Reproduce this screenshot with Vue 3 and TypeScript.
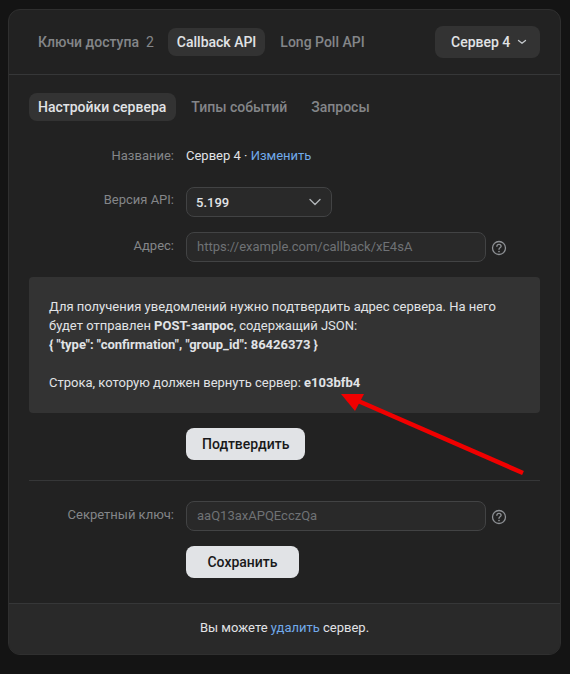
<script setup lang="ts">
const tabs = [
  { label: 'Ключи доступа', count: '2', active: false },
  { label: 'Callback API', count: '', active: true },
  { label: 'Long Poll API', count: '', active: false },
]
const subTabs = [
  { label: 'Настройки сервера', active: true },
  { label: 'Типы событий', active: false },
  { label: 'Запросы', active: false },
]
</script>

<template>
  <div class="page">
    <div class="card">
      <header class="head">
        <nav class="tabs">
          <span v-for="t in tabs" :key="t.label" class="tab" :class="{ on: t.active }">
            {{ t.label }}<span v-if="t.count" class="count">{{ t.count }}</span>
          </span>
        </nav>
        <button class="server">
          Сервер 4
          <svg width="10" height="6" viewBox="0 0 10 6" fill="none"><path d="M1.5 1.500 5 4.300l3.500-2.800" stroke="#c4c8cc" stroke-width="1.300" stroke-linecap="round" stroke-linejoin="round"/></svg>
        </button>
      </header>

      <section class="body">
        <nav class="subtabs">
          <span v-for="t in subTabs" :key="t.label" class="subtab" :class="{ on: t.active }">{{ t.label }}</span>
        </nav>

        <div class="row name-row">
          <label class="lbl">Название:</label>
          <span class="val">Сервер 4 · <a class="link">Изменить</a></span>
        </div>

        <div class="row api-row">
          <label class="lbl">Версия API:</label>
          <div class="select">
            <span>5.199</span>
            <svg width="12" height="8" viewBox="0 0 12 8" fill="none"><path d="M1 1.500 6 6.500l5-5" stroke="#aeb2b6" stroke-width="1.400" stroke-linecap="round" stroke-linejoin="round"/></svg>
          </div>
        </div>

        <div class="row addr-row">
          <label class="lbl">Адрес:</label>
          <div class="input">https://example.com/callback/xE4sA</div>
          <svg class="help" width="16" height="16" viewBox="0 0 16 16" fill="none">
            <circle cx="8" cy="8" r="6.500" stroke="#8e9195" stroke-width="1.300"/>
            <path d="M5.900 6.300c0-1.200.9-2 2.100-2s2.100.8 2.100 1.900c0 1.600-2.100 1.500-2.100 3.100" stroke="#8e9195" stroke-width="1.300" stroke-linecap="round"/>
            <circle cx="8" cy="11.500" r=".85" fill="#8e9195"/>
          </svg>
        </div>

        <div class="notice">
          Для получения уведомлений нужно подтвердить адрес сервера. На него<br>
          будет отправлен <b>POST-запрос</b>, содержащий JSON:<br>
          <b>{ "type": "confirmation", "group_id": 86426373 }</b><br><br>
          Строка, которую должен вернуть сервер: <b>e103bfb4</b>
        </div>

        <div class="action confirm"><button class="btn">Подтвердить</button></div>

        <div class="divider"></div>

        <div class="row secret-row">
          <label class="lbl">Секретный ключ:</label>
          <div class="input">aaQ13axAPQEcczQa</div>
          <svg class="help" width="16" height="16" viewBox="0 0 16 16" fill="none">
            <circle cx="8" cy="8" r="6.500" stroke="#8e9195" stroke-width="1.300"/>
            <path d="M5.900 6.300c0-1.200.9-2 2.100-2s2.100.8 2.100 1.900c0 1.600-2.100 1.500-2.100 3.100" stroke="#8e9195" stroke-width="1.300" stroke-linecap="round"/>
            <circle cx="8" cy="11.500" r=".85" fill="#8e9195"/>
          </svg>
        </div>

        <div class="action save"><button class="btn">Сохранить</button></div>
      </section>

      <footer class="foot">Вы можете <a class="link">удалить</a> сервер.</footer>
    </div>

    <svg class="arrow" width="570" height="674" viewBox="0 0 570 674" fill="none">
      <path d="M523 473 L356 400" stroke="#f00000" stroke-width="4.500"/>
      <path d="M341 394 L364 394 L355 411 Z" fill="#f00000"/>
    </svg>
  </div>
</template>

<style>
html, body { margin: 0; background: #141414; }
</style>

<style scoped>
.page {
  position: relative;
  width: 570px;
  height: 674px;
  padding: 9px 9px 0 8px;
  box-sizing: border-box;
  background: #141414;
  font-family: Roboto, "Noto Sans", sans-serif;
  font-size: 13px;
  color: #e1e3e6;
  overflow: hidden;
}
.card {
  height: 646px;
  box-sizing: border-box;
  border: 1px solid #2f2f2f;
  border-radius: 12px;
  background: #222222;
  display: flex;
  flex-direction: column;
  overflow: hidden;
}
.head {
  height: 65px;
  flex: none;
  box-sizing: border-box;
  border-bottom: 1px solid #363738;
  display: flex;
  align-items: center;
  justify-content: space-between;
  padding: 0 20px 1px 20px;
}
.tabs { display: flex; align-items: center; }
.tab {
  height: 28px;
  line-height: 28px;
  padding: 0 9px;
  margin-right: 6px;
  border-radius: 8px;
  color: #848689;
  font-size: 14px;
  font-weight: 500;
  white-space: nowrap;
}
.tab:first-child { margin-right: 5px; }
.tab.on { background: #333333; color: #e1e3e6; }
.count { margin-left: 7px; font-weight: 400; }
.server {
  height: 32px;
  width: 105px;
  border: 0;
  border-radius: 8px;
  background: #333333;
  color: #e1e3e6;
  font: 500 14px Roboto, sans-serif;
  display: flex;
  align-items: center;
  gap: 7px;
  padding: 0 0 0 16px;
}
.body { flex: 1; padding: 18px 20px 0; display: flex; flex-direction: column; }
.subtabs { display: flex; align-items: center; height: 28px; }
.subtab {
  height: 28px;
  line-height: 28px;
  padding: 0 9px;
  margin-right: 6px;
  border-radius: 8px;
  color: #848689;
  font-size: 14px;
  font-weight: 500;
  white-space: nowrap;
}
.subtab.on { background: #333333; color: #e1e3e6; padding-right: 10px; }
.row { display: flex; align-items: flex-start; }
.lbl {
  width: 145px;
  flex: none;
  text-align: right;
  color: #848689;
  margin-right: 12px;
  line-height: 18px;
}
.name-row { margin-top: 26px; height: 18px; }
.val { line-height: 18px; }
.link { color: #71aaeb; }
.api-row { margin-top: 22px; }
.api-row .lbl { padding-top: 4px; }
.select {
  width: 146px;
  height: 30px;
  box-sizing: border-box;
  border: 1px solid #424344;
  border-radius: 8px;
  background: #292929;
  display: flex;
  align-items: center;
  justify-content: space-between;
  padding: 0 10px 0 9px;
  font-weight: 500;
}
.input {
  width: 300px;
  height: 30px;
  box-sizing: border-box;
  border: 1px solid #424344;
  border-radius: 8px;
  background: #292929;
  color: #6f7275;
  line-height: 28px;
  padding-left: 10px;
}
.help { margin: 8px 0 0 5px; flex: none; }
.addr-row { margin-top: 15px; }
.addr-row .lbl { padding-top: 5px; }
.notice {
  margin-top: 15px;
  height: 136px;
  box-sizing: border-box;
  padding: 20px;
  border-radius: 4px;
  background: #333333;
  line-height: 19px;
  color: #e1e3e6;
}
.notice b { font-weight: 700; }
.action { padding-left: 157px; }
.confirm { margin-top: 15px; }
.save { margin-top: 15px; }
.btn {
  height: 32px;
  padding: 0 16px;
  border: 0;
  border-radius: 8px;
  background: #e1e3e6;
  color: #19191a;
  font: 500 14px Roboto, sans-serif;
}
.save .btn { width: 113px; padding: 0; }
.divider { height: 1px; background: #363738; margin-top: 20px; }
.secret-row { margin-top: 20px; }
.secret-row .lbl { padding-top: 5px; }
.foot {
  height: 51px;
  flex: none;
  box-sizing: border-box;
  border-top: 1px solid #363738;
  background: #292929;
  text-align: center;
  line-height: 47px;
}
.arrow { position: absolute; left: 0; top: 0; pointer-events: none; }
</style>
